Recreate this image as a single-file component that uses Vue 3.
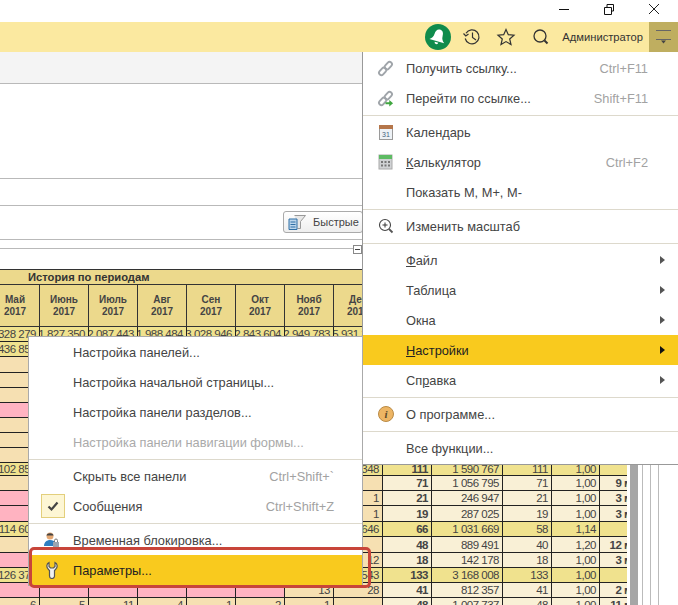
<script setup>
const months = ['Май', 'Июнь', 'Июль', 'Авг', 'Сен', 'Окт', 'Нояб', 'Дек']

// строки таблицы: высота, заливка, месяцы (m), правая часть (r)
const rows = [
  { h: 15, kind: 'sum', m: ['2 328 279', '1 827 350', '2 087 443', '1 988 484', '3 028 946', '2 843 604', '2 949 783', '5 931 348'], r: [] },
  { h: 15, kind: 'sum', m: ['1 436 854'], r: [] },
  { h: 16, kind: 'tan', m: [], r: [] },
  { h: 15, kind: 'tan', m: [], r: [] },
  { h: 15, kind: 'tan', m: [], r: [] },
  { h: 15, kind: 'pink', m: [], r: [] },
  { h: 15, kind: 'tan', m: [], r: [] },
  { h: 15, kind: 'tan', m: [], r: [] },
  { h: 15, kind: 'tan', m: [], r: [] },
  { h: 13, kind: 'sum', m: ['1 102 854', '', '', '', '', '', '', '348'], r: ['111', '1 590 767', '111', '1,00', ''] },
  { h: 15, kind: 'tan', m: [], r: ['71', '1 056 795', '71', '1,00', '9 м'] },
  { h: 15, kind: 'pink', m: ['', '', '', '', '', '', '', '1'], r: ['21', '246 947', '21', '1,00', '3 м'] },
  { h: 16, kind: 'pink', m: ['', '', '', '', '', '', '', '1'], r: ['19', '287 025', '19', '1,00', '3 м'] },
  { h: 15, kind: 'sum', m: ['1 114 604', '', '', '', '', '', '', '646'], r: ['66', '1 031 669', '58', '1,14', ''] },
  { h: 16, kind: 'tan', m: [], r: ['48', '889 491', '40', '1,20', '12 м'] },
  { h: 15, kind: 'pink', m: ['', '', '', '', '', '', '', '12'], r: ['18', '142 178', '18', '1,00', '3 м'] },
  { h: 15, kind: 'sum', m: ['1 126 374', '', '', '', '', '', '', '543'], r: ['133', '3 168 008', '133', '1,00', ''] },
  { h: 15, kind: 'pink', m: ['', '', '', '', '', '', '13', '28'], r: ['41', '812 357', '41', '1,00', '2 м'] },
  { h: 15, kind: 'tan', m: ['6', '5', '11', '4', '1', '2', '1', ''], r: ['48', '1 007 737', '48', '1,00', '11 м'] }
]

function monthCells(row) {
  const cells = []
  for (let i = 0; i < 8; i++) cells.push(row.m[i] || '')
  return cells
}

const commandMenu = [
  { label: 'Получить ссылку...', key: 'Ctrl+F11', icon: 'link' },
  { label: 'Перейти по ссылке...', key: 'Shift+F11', icon: 'linkgo', sep: true },
  { label: 'Календарь', icon: 'cal' },
  { label: 'Калькулятор', key: 'Ctrl+F2', icon: 'calc' },
  { label: 'Показать М, М+, М-', sep: true },
  { label: 'Изменить масштаб', icon: 'zoom', sep: true },
  { label: 'Файл', arrow: true },
  { label: 'Таблица', arrow: true },
  { label: 'Окна', arrow: true },
  { label: 'Настройки', arrow: true, active: true },
  { label: 'Справка', arrow: true, sep: true },
  { label: 'О программе...', icon: 'info', sep: true },
  { label: 'Все функции...' }
]

const settingsMenu = [
  { label: 'Настройка панелей...' },
  { label: 'Настройка начальной страницы...' },
  { label: 'Настройка панели разделов...' },
  { label: 'Настройка панели навигации формы...', disabled: true, sep: true },
  { label: 'Скрыть все панели', key: 'Ctrl+Shift+`' },
  { label: 'Сообщения', key: 'Ctrl+Shift+Z', checked: true, sep: true },
  { label: 'Временная блокировка...', icon: 'lock' },
  { label: 'Параметры...', icon: 'wrench', active: true }
]
</script>

<template>
  <div class="page">
    <div class="titlebar">
      <svg width="16" height="16" viewBox="0 0 16 16"><path d="M3 8.500h10" stroke="#111" fill="none" /></svg>
      <svg width="16" height="16" viewBox="0 0 16 16"><path d="M3.500 6.500h7v7h-7zM6 6V3.500h6.500V10H11" stroke="#111" fill="none" /></svg>
      <svg width="16" height="16" viewBox="0 0 16 16"><path d="M3 3l10 10M13 3L3 13" stroke="#222" fill="none" /></svg>
    </div>

    <header class="topbar">
      <span class="bell">
        <svg width="22" height="22" viewBox="0 0 20 20"><g transform="rotate(16 10 10)" fill="#fff"><path d="M10 3c-2.500 0-3.800 2-3.800 5 0 3-1.400 4.500-3.200 6h14c-1.800-1.500-3.200-3-3.200-6 0-3-1.300-5-3.800-5z" /><path d="M8.300 15h3.400a1.700 1.700 0 0 1-3.400 0z" /></g></svg>
      </span>
      <svg width="20" height="20" viewBox="0 0 20 20"><path d="M4 6.300A7 7 0 1 1 3.200 11.500M1.500 6.500L3.800 9l2.700-2M10.500 5.500V10.500l3.500 2.500" stroke="#333" stroke-width="1.200" fill="none" /></svg>
      <svg class="star" width="20" height="20" viewBox="0 0 20 20"><path d="M10 2.500l2.300 5.200 5.700.5-4.300 3.800 1.300 5.500L10 14.600l-5 2.900 1.300-5.500L2 8.200l5.700-.5z" stroke="#333" stroke-width="1.200" fill="none" /></svg>
      <svg class="search" width="20" height="20" viewBox="0 0 20 20"><circle cx="9" cy="9" r="6" stroke="#333" stroke-width="1.300" fill="none" /><path d="M13.500 13.500l3 3" stroke="#333" stroke-width="2" /></svg>
      <span class="user">Администратор</span>
      <span class="burger">
        <svg width="16" height="16" viewBox="0 0 16 16"><path d="M0 1.500h15M0 10.500h15" stroke="#666" fill="none" /><path d="M5 11.500h5L7.500 14.500z" fill="#444" /></svg>
      </span>
    </header>

    <div class="strip grey"></div>
    <div class="strip blank"></div>
    <div class="strip short"></div>
    <div class="strip filters">
      <button class="quick">
        <svg width="22" height="18" viewBox="0 0 22 18"><path d="M6.500 2.500h11l-5 6v7h-3" fill="#e8e8e8" stroke="#999" /><path d="M1 6h8v10.500H1z" fill="#bcd6ec" stroke="#2f6fa5" /><path d="M2.500 9h5M2.500 11.500h5M2.500 14h5" stroke="#2f6fa5" /></svg>
        <span>Быстрые</span>
      </button>
    </div>
    <div class="strip gap"><span class="collapse"></span></div>

    <div class="report">
      <div class="grid">
        <div class="group">История по периодам</div>
        <div class="month-row">
          <div v-for="m in months" :key="m" class="month"><span>{{ m }}</span><span>2017</span></div>
        </div>
        <div v-for="(row, i) in rows" :key="i" class="row" :class="row.kind" :style="{ height: row.h + 'px' }">
          <span v-for="(cell, j) in monthCells(row)" :key="j" class="c m" :class="{ tail: j > 5 }">{{ cell }}</span>
          <span class="c qty"><b>{{ row.r[0] }}</b></span>
          <span class="c amount">{{ row.r[1] }}</span>
          <span class="c qty">{{ row.r[2] }}</span>
          <span class="c rate">{{ row.r[3] }}</span>
          <span class="c term"><b>{{ row.r[4] }}</b></span>
        </div>
      </div>
      <div class="scroll"></div>
      <div class="trail"><i></i><i></i><i></i></div>
    </div>

    <div class="menu command">
      <template v-for="item in commandMenu" :key="item.label">
        <div class="item" :class="{ active: item.active }">
          <span class="ico">
            <svg v-if="item.icon === 'link' || item.icon === 'linkgo'" width="17" height="17" viewBox="0 0 18 18">
              <g fill="none" stroke="#a0a5aa" stroke-width="2">
                <rect x="1.500" y="9.500" width="9" height="5" rx="2.500" transform="rotate(-48 6 12)" />
                <rect x="7.500" y="3.500" width="9" height="5" rx="2.500" transform="rotate(-48 12 6)" />
              </g>
              <path v-if="item.icon === 'linkgo'" d="M9 13h4v-2.500l4 3.500-4 3.500V15H9z" fill="#3fa63f" />
            </svg>
            <svg v-else-if="item.icon === 'cal'" width="16" height="16" viewBox="0 0 16 16"><rect x="1.500" y="2.500" width="13" height="13" fill="#eef2f6" stroke="#9a9a9a" /><rect x="1" y="1" width="14" height="4" fill="#b5764a" /><text x="8" y="13" text-anchor="middle" font-size="7" font-family="Liberation Sans" fill="#44627e">31</text></svg>
            <svg v-else-if="item.icon === 'calc'" width="16" height="16" viewBox="0 0 16 16"><rect x="1" y="1" width="13" height="14" fill="#d0d2d4" stroke="#aaa" /><rect x="1" y="1" width="13" height="4" fill="#5dbb63" /><path d="M3 7h2v2H3zM6.500 7h2v2h-2zM10 7h2v2h-2zM3 10.500h2v2H3zM6.500 10.500h2v2h-2zM10 10.500h2v2h-2z" fill="#777" /></svg>
            <svg v-else-if="item.icon === 'zoom'" width="16" height="16" viewBox="0 0 16 16"><circle cx="7" cy="7" r="5.500" fill="#fff" stroke="#444" stroke-width="1.100" /><path d="M4.500 7h5M7 4.500v5" stroke="#333" /><path d="M11 11l3.500 3.500" stroke="#555" stroke-width="1.800" /></svg>
            <svg v-else-if="item.icon === 'info'" width="16" height="16" viewBox="0 0 16 16"><circle cx="8" cy="8" r="7.500" fill="#edb564" stroke="#b98a45" /><text x="8" y="12" text-anchor="middle" font-size="11" font-weight="bold" font-style="italic" font-family="Liberation Serif" fill="#5b4a2a">i</text></svg>
          </span>
          <span class="label">
            <template v-if="item.label === 'Файл'"><u>Ф</u>айл</template>
            <template v-else-if="item.label === 'Настройки'"><u>Н</u>астройки</template>
            <template v-else-if="item.label === 'Справка'">Сп<u>р</u>авка</template>
            <template v-else-if="item.label === 'Календарь'">Кален<u>д</u>арь</template>
            <template v-else-if="item.label === 'Калькулятор'"><u>К</u>алькулятор</template>
            <template v-else>{{ item.label }}</template>
          </span>
          <span v-if="item.key" class="key">{{ item.key }}</span>
          <span v-if="item.arrow" class="arrow"></span>
        </div>
        <div v-if="item.sep" class="sep"></div>
      </template>
    </div>

    <div class="menu settings">
      <template v-for="item in settingsMenu" :key="item.label">
        <div class="item" :class="{ active: item.active, disabled: item.disabled }">
          <span v-if="item.checked" class="check">
            <svg width="12" height="12" viewBox="0 0 12 12"><path d="M1.500 6.500l3 3 6-7" stroke="#444" stroke-width="2.200" fill="none" /></svg>
          </span>
          <span v-else class="ico">
            <svg v-if="item.icon === 'lock'" width="18" height="18" viewBox="0 0 18 18"><circle cx="7" cy="5" r="3.500" fill="#e5a873" /><path d="M3.500 4.500C4 1.500 10 1.500 10.500 4.500z" fill="#444" /><path d="M1 15c0-4 3-6 6-6s4 1 5 2v4z" fill="#2f7fc1" /><rect x="10" y="11" width="6" height="5" fill="#9aa5b1" /><path d="M11.500 11V9.500a1.500 1.500 0 0 1 3 0V11" stroke="#777" fill="none" /></svg>
            <svg v-else-if="item.icon === 'wrench'" width="16" height="18" viewBox="0 0 16 18"><path d="M5 1.500v4l1.500 1.500h3L11 5.500v-4c2.500 1 3 5 .5 7L10.500 9.500V15a2.500 2.500 0 0 1-5 0V9.500L4.500 8.500C2 6.500 2.500 2.500 5 1.500z" fill="#f2f2ee" stroke="#555" stroke-width="1.200" /></svg>
          </span>
          <span class="label">{{ item.label }}</span>
          <span v-if="item.key" class="key">{{ item.key }}</span>
        </div>
        <div v-if="item.sep" class="sep"></div>
      </template>
      <div class="callout"></div>
    </div>
  </div>
</template>

<style>
html, body {
  margin: 0;
  background: #fff;
  overflow: hidden;
}
</style>

<style scoped>
.page {
  position: relative;
  width: 678px;
  height: 605px;
  display: flex;
  flex-direction: column;
  overflow: hidden;
  background: #fff;
  font-family: "Liberation Sans", Arial, sans-serif;
  color: #333;
}

.titlebar {
  height: 22px;
  flex: none;
  display: flex;
  justify-content: flex-end;
  align-items: flex-start;
  gap: 29px;
  padding: 1px 16px 0 0;
  box-sizing: border-box;
}

.topbar {
  height: 30px;
  flex: none;
  background: #fbe9a0;
  display: flex;
  align-items: center;
  justify-content: flex-end;
}

.bell {
  width: 26px;
  height: 26px;
  border-radius: 50%;
  background: #0f8b4c;
  display: flex;
  align-items: center;
  justify-content: center;
  margin-right: 11px;
}

.star {
  margin-left: 14px;
}

.search {
  margin-left: 15px;
}

.user {
  margin-left: 11px;
  margin-right: 6px;
  font-size: 11.2px;
  color: #333;
}

.burger {
  width: 29px;
  height: 30px;
  background: #bfae60;
  display: flex;
  align-items: center;
  justify-content: center;
}

.strip {
  flex: none;
  border-bottom: 1px solid #b9b9b9;
  box-sizing: border-box;
}

.grey {
  height: 32px;
  background: #f4f4f4;
}

.blank {
  height: 95px;
}

.short {
  height: 27px;
}

.filters {
  height: 34px;
  padding: 5px 315px 0 0;
  display: flex;
  justify-content: flex-end;
}

.quick {
  height: 22px;
  width: 80px;
  flex: none;
  padding: 0 0 0 4px;
  display: flex;
  align-items: center;
  gap: 3px;
  background: linear-gradient(#fff, #eee);
  border: 1px solid #aaa;
  border-radius: 3px;
  font: 11px "Liberation Sans", Arial, sans-serif;
  color: #444;
}

.gap {
  height: 9px;
  position: relative;
}

.collapse {
  position: absolute;
  left: 353px;
  top: 5px;
  width: 9px;
  height: 9px;
  box-sizing: border-box;
  background: #fff;
  border: 1px solid #888;
  display: flex;
  align-items: center;
  justify-content: center;
}

.collapse::after {
  content: "";
  width: 5px;
  height: 1px;
  background: #444;
}

.report {
  flex: 1;
  min-height: 0;
  display: flex;
  padding-top: 20px;
}

.grid {
  flex: none;
  margin-left: -9px;
  width: 636px;
}

.group {
  height: 16px;
  line-height: 15px;
  background: #ecd98c;
  border-top: 1px solid #333;
  border-bottom: 1px solid #333;
  padding-left: 37px;
  font-size: 11.2px;
  font-weight: bold;
  color: #333;
  box-sizing: border-box;
}

.month-row {
  display: flex;
  height: 42px;
  background: #ecd98c;
  border-bottom: 1px solid #333;
  box-sizing: border-box;
}

.month {
  width: 49px;
  box-sizing: border-box;
  border-right: 1px solid #333;
  display: flex;
  flex-direction: column;
  justify-content: center;
  text-align: center;
  font-size: 10px;
  font-weight: bold;
  line-height: 12px;
  color: #444;
}

.row {
  display: flex;
  box-sizing: border-box;
  border-bottom: 1px solid #222;
  font-size: 11.5px;
  letter-spacing: -0.5px;
  overflow: hidden;
}

.sum {
  background: #f3e59b;
}

.tan {
  background: #f6e0b2;
}

.pink {
  background: #ffb3c1;
}

.c {
  flex: none;
  box-sizing: border-box;
  border-right: 1px solid #222;
  padding-right: 3px;
  display: flex;
  align-items: center;
  justify-content: flex-end;
  white-space: pre;
  overflow: hidden;
  color: #444;
}

.m {
  width: 49px;
}

.row.pink .tail {
  background: #f6e0b2;
}

.qty {
  width: 49px;
}

.amount {
  width: 71px;
}

.rate {
  width: 48px;
}

.term {
  width: 28px;
  border-right: 0;
  padding-right: 0;
}

.term b {
  margin-right: -4px;
}

.qty,
.amount,
.rate,
.term {
  background: #f9f0d6;
}

.row.sum .c {
  background: #f0e28e;
}

.scroll {
  flex: none;
  width: 8px;
  margin-left: 3px;
  background: #a6a6a6;
}

.trail {
  flex: none;
  display: flex;
  gap: 7px;
  padding-left: 4px;
}

.trail i {
  width: 1px;
  background: #bbb;
}

.menu {
  position: absolute;
  background: #fff;
  font-size: 12.8px;
  box-sizing: border-box;
}

.command {
  left: 362px;
  top: 52px;
  width: 316px;
  border-left: 1px solid #999;
  border-bottom: 1px solid #999;
  padding: 1px 0;
}

.settings {
  left: 28px;
  top: 336px;
  width: 335px;
  border: 1px solid #aaa;
}

.item {
  display: flex;
  align-items: center;
  height: 30px;
  color: #444;
}

.ico {
  width: 43px;
  flex: none;
  display: flex;
  justify-content: center;
  align-items: center;
  padding-left: 2px;
  box-sizing: border-box;
}

.settings .ico {
  width: 44px;
}

.label {
  flex: 1;
  white-space: nowrap;
}

.key {
  margin-right: 30px;
  color: #a2a2a2;
}

.settings .key {
  margin-right: 28px;
}

.arrow {
  width: 0;
  height: 0;
  border-left: 5px solid #555;
  border-top: 4.5px solid transparent;
  border-bottom: 4.5px solid transparent;
  margin-right: 13px;
}

.sep {
  height: 1px;
  margin: 2px 0 1px;
  background: #ddd9cc;
}

.item.active {
  background: #f9ca1e;
  color: #222;
}

.item.active .arrow {
  border-left-color: #111;
}

.item.disabled {
  color: #aaa;
}

.check {
  width: 24px;
  height: 24px;
  flex: none;
  margin: 0 8px 0 12px;
  box-sizing: border-box;
  display: flex;
  align-items: center;
  justify-content: center;
  background: #fdf6d4;
  border: 1px solid #e3cf7c;
}

.callout {
  position: absolute;
  left: 0;
  top: 210px;
  width: 342px;
  height: 41px;
  border: 3px solid #c8453a;
  border-radius: 5px;
  box-sizing: border-box;
}
</style>
